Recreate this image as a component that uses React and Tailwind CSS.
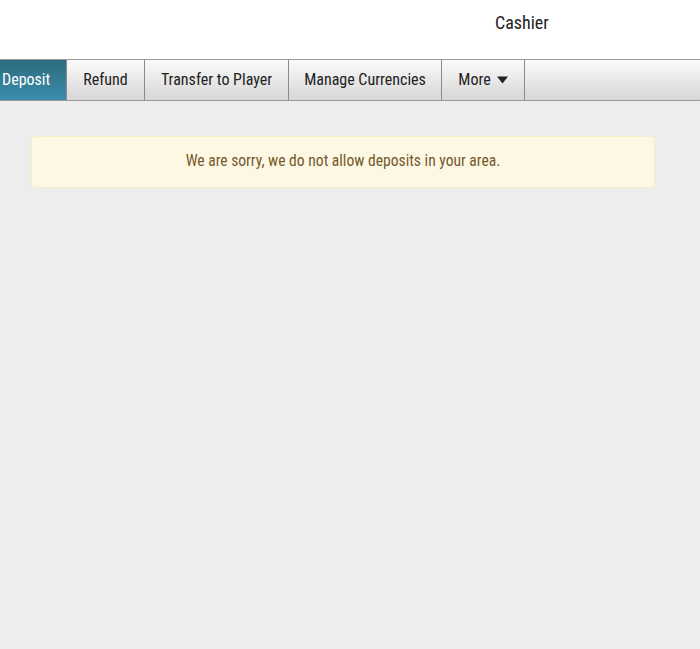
import React from "react";

export default function App() {
  return (
    <div className="min-h-[649px] w-[700px] bg-[#ededed] overflow-hidden" style={{ fontFamily: '"Roboto Condensed", Roboto, "Liberation Sans", sans-serif' }}>
      <div className="h-[59px] bg-white">
        <div className="pl-[495px] pt-[12px] text-[18px] text-[#222] leading-[22px]">Cashier</div>
      </div>
      <div className="h-[42px] flex border-t border-b border-[#9a9a9a] bg-gradient-to-b from-[#fbfbfb] to-[#d6d6d6]">
        <div className="w-[67px] flex items-center pl-[2px] text-white text-[16px] bg-gradient-to-b from-[#2c6c7e] to-[#3b8dad] border-r border-[#8a8a8a]">Deposit</div>
        <div className="w-[78px] flex items-center justify-center text-[16px] text-[#222] border-r border-[#8a8a8a]">Refund</div>
        <div className="w-[144px] flex items-center justify-center text-[16px] text-[#222] border-r border-[#8a8a8a]">Transfer to Player</div>
        <div className="w-[153px] flex items-center justify-center text-[16px] text-[#222] border-r border-[#8a8a8a]">Manage Currencies</div>
        <div className="w-[83px] flex items-center justify-center gap-[6px] text-[16px] text-[#222] border-r border-[#8a8a8a]">
          More
          <svg width="11" height="8" viewBox="0 0 11 8"><path d="M0 0.5 L11 0.5 L5.5 7.5 Z" fill="#222" /></svg>
        </div>
      </div>
      <div className="pt-[35px] pl-[31px]">
        <div className="w-[624px] h-[52px] rounded-[4px] border border-[#f7ecc6] bg-[#fcf8e3] flex items-center justify-center text-[15.6px] text-[#76592c]">
          We are sorry, we do not allow deposits in your area.
        </div>
      </div>
    </div>
  );
}
